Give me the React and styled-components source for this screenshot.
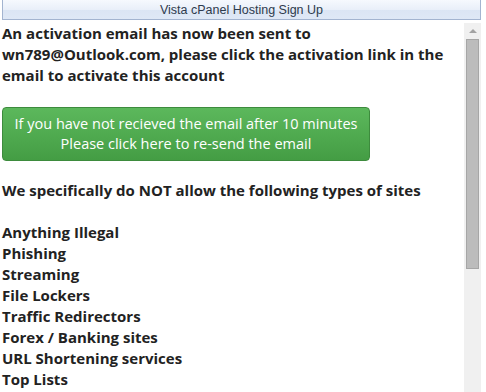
import React from "react"
import styled, { createGlobalStyle } from "styled-components"

const GlobalStyle = createGlobalStyle`
  html, body {
    margin: 0;
    padding: 0;
    background: #fff;
  }
`

const banned = [
  "Anything Illegal",
  "Phishing",
  "Streaming",
  "File Lockers",
  "Traffic Redirectors",
  "Forex / Banking sites",
  "URL Shortening services",
  "Top Lists",
]

const App = () => (
  <Window>
    <GlobalStyle />
    <TitleBar>Vista cPanel Hosting Sign Up</TitleBar>
    <Body>
      <Content>
        <Para>
          An activation email has now been sent to wn789@Outlook.com, please
          click the activation link in the email to activate this account
        </Para>
        <ResendButton>
          If you have not recieved the email after 10 minutes
          <br />
          Please click here to re-send the email
        </ResendButton>
        <Para>We specifically do NOT allow the following types of sites</Para>
        <List>
          {banned.map(item => (
            <li key={item}>{item}</li>
          ))}
        </List>
      </Content>
      <ScrollTrack>
        <ArrowUp />
        <Thumb />
      </ScrollTrack>
    </Body>
  </Window>
)

const Window = styled.div`
  width: 486px;
  height: 392px;
  overflow: hidden;
  display: flex;
  flex-direction: column;
`

const TitleBar = styled.div`
  margin: -1px 5px 0 2px;
  height: 21px;
  box-sizing: border-box;
  border: 1px solid #a3b4d0;
  background: linear-gradient(#f6f9fe 0%, #e9eff9 50%, #dbe5f4 51%, #dfe8f6 100%);
  display: flex;
  align-items: center;
  justify-content: center;
  font-family: "Liberation Sans", Arial, sans-serif;
  font-size: 12.5px;
  color: #2e3b4d;
  padding-top: 1px;
`

const Body = styled.div`
  flex: 1;
  display: flex;
  min-height: 0;
  padding-top: 3px;
`

const Content = styled.div`
  flex: 1;
  overflow: hidden;
  padding: 0 0 0 2px;
  font-family: "Open Sans", sans-serif;
  font-weight: 700;
  font-size: 15px;
  line-height: 21px;
  color: #222;
`

const Para = styled.p`
  margin: 0 0 21px;
`

const ResendButton = styled.button`
  display: block;
  width: 368px;
  height: 54px;
  margin: 0 0 19px;
  padding: 0;
  border: 1px solid #3d8b3d;
  border-radius: 4px;
  background: linear-gradient(#5cb85c, #449d44);
  color: #fff;
  font-family: "Open Sans", sans-serif;
  font-weight: 400;
  font-size: 14.5px;
  line-height: 20px;
  text-align: center;
  cursor: pointer;
`

const List = styled.ul`
  margin: 0;
  padding: 0;
  list-style: none;
`

const ScrollTrack = styled.div`
  width: 17px;
  margin-right: 5px;
  background: #f0f0f0;
  display: flex;
  flex-direction: column;
  align-items: center;
`

const ArrowUp = styled.div`
  margin-top: 6px;
  width: 0;
  height: 0;
  border-left: 4px solid transparent;
  border-right: 4px solid transparent;
  border-bottom: 4px solid #a3a3a3;
`

const Thumb = styled.div`
  margin-top: 6px;
  width: 13px;
  height: 230px;
  box-sizing: border-box;
  background: #bcbcbc;
  border: 1px solid #a6a6a6;
`

export default App
